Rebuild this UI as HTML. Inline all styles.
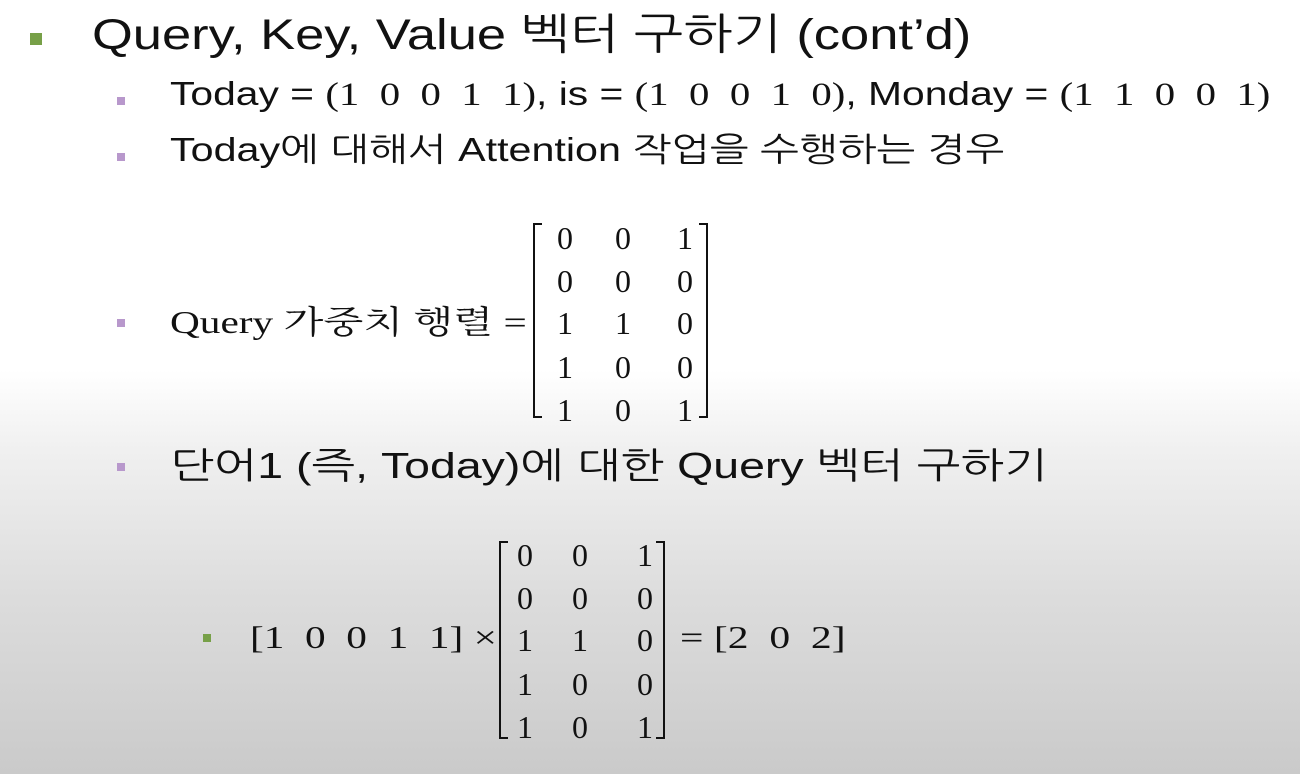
<!DOCTYPE html>
<html><head><meta charset="utf-8"><style>
body{margin:0;width:1300px;height:774px;overflow:hidden;position:relative;
background:linear-gradient(to bottom,#fff 0px,#fff 370px,#f0f0f0 450px,#dcdcdc 600px,#cacaca 774px);
font-family:"Liberation Sans","NanumGothic","Noto Sans CJK KR",sans-serif;color:#111}
.a{position:absolute;white-space:nowrap;line-height:1;transform-origin:0 50%}
.s{font-family:"Liberation Serif","Noto Serif CJK SC",serif}
.b{position:absolute}
.c{position:absolute;font-family:"Liberation Serif",serif;font-size:32px;line-height:1;transform:translate(-50%,-50%)}
</style></head><body>
<div class="b" style="left:30px;top:33px;width:12px;height:12px;background:#77a048"></div>
<div class="a" style="left:92px;top:14px;font-size:43px;transform:scaleX(1.22)">Query, Key, Value 벡터 구하기 (cont’d)</div>

<div class="b" style="left:117px;top:97px;width:8px;height:8px;background:#b898cc"></div>
<div class="a" style="left:170px;top:77px;font-size:33px;transform:scaleX(1.236)">Today = <span class="s">(1&nbsp; 0&nbsp; 0&nbsp; 1&nbsp; 1)</span>, is = <span class="s">(1&nbsp; 0&nbsp; 0&nbsp; 1&nbsp; 0)</span>, Monday = <span class="s">(1&nbsp; 1&nbsp; 0&nbsp; 0&nbsp; 1)</span></div>
<div class="b" style="left:117px;top:153px;width:8px;height:8px;background:#b898cc"></div>
<div class="a" style="left:170px;top:133px;font-size:33px;transform:scaleX(1.25)">Today에 대해서 Attention 작업을 수행하는 경우</div>

<div class="b" style="left:117px;top:319px;width:8px;height:8px;background:#b898cc"></div>
<div class="a s" style="left:170px;top:306px;font-size:32px;transform:scaleX(1.29)">Query 가중치 행렬 =</div>
<div class="b" style="left:533px;top:223px;width:2px;height:195px;background:#111"></div>
<div class="b" style="left:533px;top:223px;width:9px;height:2px;background:#111"></div>
<div class="b" style="left:533px;top:416px;width:9px;height:2px;background:#111"></div>
<div class="b" style="left:706px;top:223px;width:2px;height:195px;background:#111"></div>
<div class="b" style="left:699px;top:223px;width:9px;height:2px;background:#111"></div>
<div class="b" style="left:699px;top:416px;width:9px;height:2px;background:#111"></div>
<div class="c" style="left:565px;top:238px">0</div><div class="c" style="left:623px;top:238px">0</div><div class="c" style="left:685px;top:238px">1</div>
<div class="c" style="left:565px;top:281px">0</div><div class="c" style="left:623px;top:281px">0</div><div class="c" style="left:685px;top:281px">0</div>
<div class="c" style="left:565px;top:323px">1</div><div class="c" style="left:623px;top:323px">1</div><div class="c" style="left:685px;top:323px">0</div>
<div class="c" style="left:565px;top:367px">1</div><div class="c" style="left:623px;top:367px">0</div><div class="c" style="left:685px;top:367px">0</div>
<div class="c" style="left:565px;top:410px">1</div><div class="c" style="left:623px;top:410px">0</div><div class="c" style="left:685px;top:410px">1</div>

<div class="b" style="left:117px;top:463px;width:8px;height:8px;background:#b898cc"></div>
<div class="a" style="left:170px;top:448px;font-size:36px;transform:scaleX(1.29)">단어1 (즉, Today)에 대한 Query 벡터 구하기</div>

<div class="b" style="left:203px;top:634px;width:8px;height:8px;background:#77a048"></div>
<div class="a s" style="left:250px;top:621px;font-size:32px;transform:scaleX(1.29)">[1&nbsp; 0&nbsp; 0&nbsp; 1&nbsp; 1] ×</div>
<div class="b" style="left:499px;top:541px;width:2px;height:198px;background:#111"></div>
<div class="b" style="left:499px;top:541px;width:9px;height:2px;background:#111"></div>
<div class="b" style="left:499px;top:737px;width:9px;height:2px;background:#111"></div>
<div class="b" style="left:663px;top:541px;width:2px;height:198px;background:#111"></div>
<div class="b" style="left:656px;top:541px;width:9px;height:2px;background:#111"></div>
<div class="b" style="left:656px;top:737px;width:9px;height:2px;background:#111"></div>
<div class="c" style="left:525px;top:555px">0</div><div class="c" style="left:580px;top:555px">0</div><div class="c" style="left:645px;top:555px">1</div>
<div class="c" style="left:525px;top:598px">0</div><div class="c" style="left:580px;top:598px">0</div><div class="c" style="left:645px;top:598px">0</div>
<div class="c" style="left:525px;top:640px">1</div><div class="c" style="left:580px;top:640px">1</div><div class="c" style="left:645px;top:640px">0</div>
<div class="c" style="left:525px;top:684px">1</div><div class="c" style="left:580px;top:684px">0</div><div class="c" style="left:645px;top:684px">0</div>
<div class="c" style="left:525px;top:727px">1</div><div class="c" style="left:580px;top:727px">0</div><div class="c" style="left:645px;top:727px">1</div>
<div class="a s" style="left:680px;top:621px;font-size:32px;transform:scaleX(1.3)">= [2&nbsp; 0&nbsp; 2]</div>
</body></html>
